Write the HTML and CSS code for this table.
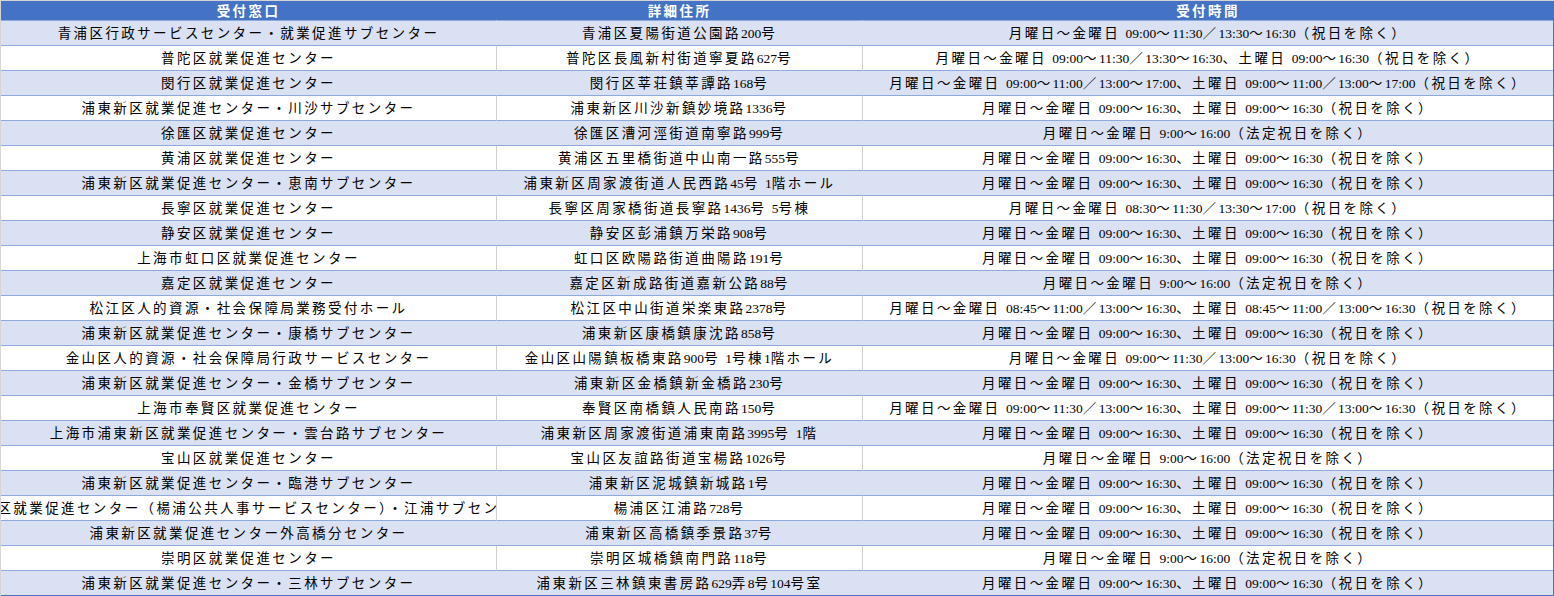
FILE: index.html
```html
<!DOCTYPE html>
<html lang="ja">
<head>
<meta charset="utf-8">
<title>受付窓口</title>
<link rel="stylesheet" href="styles.css">
</head>
<body>
<div class="sheet">
  <div class="grid">
    <div class="h c1"><span>受付窓口</span></div>
    <div class="h c2"><span>詳細住所</span></div>
    <div class="h c3"><span>受付時間</span></div>

    <div class="d c1"><span>青浦区行政サービスセンター・就業促進サブセンター</span></div>
    <div class="d c2"><span>青浦区夏陽街道公園路<span class="n">200</span>号</span></div>
    <div class="d c3"><span>月曜日～金曜日 <span class="n">09:00</span>～<span class="n">11:30</span>／<span class="n">13:30</span>～<span class="n">16:30</span>（祝日を除く）</span></div>

    <div class="w c1"><span>普陀区就業促進センター</span></div>
    <div class="w c2"><span>普陀区長風新村街道寧夏路<span class="n">627</span>号</span></div>
    <div class="w c3"><span>月曜日～金曜日 <span class="n">09:00</span>～<span class="n">11:30</span>／<span class="n">13:30</span>～<span class="n">16:30</span>、土曜日 <span class="n">09:00</span>～<span class="n">16:30</span>（祝日を除く）</span></div>

    <div class="d c1"><span>閔行区就業促進センター</span></div>
    <div class="d c2"><span>閔行区莘荘鎮莘譚路<span class="n">168</span>号</span></div>
    <div class="d c3"><span>月曜日～金曜日 <span class="n">09:00</span>～<span class="n">11:00</span>／<span class="n">13:00</span>～<span class="n">17:00</span>、土曜日 <span class="n">09:00</span>～<span class="n">11:00</span>／<span class="n">13:00</span>～<span class="n">17:00</span>（祝日を除く）</span></div>

    <div class="w c1"><span>浦東新区就業促進センター・川沙サブセンター</span></div>
    <div class="w c2"><span>浦東新区川沙新鎮妙境路<span class="n">1336</span>号</span></div>
    <div class="w c3"><span>月曜日～金曜日 <span class="n">09:00</span>～<span class="n">16:30</span>、土曜日 <span class="n">09:00</span>～<span class="n">16:30</span>（祝日を除く）</span></div>

    <div class="d c1"><span>徐匯区就業促進センター</span></div>
    <div class="d c2"><span>徐匯区漕河涇街道南寧路<span class="n">999</span>号</span></div>
    <div class="d c3"><span>月曜日～金曜日 <span class="n">9:00</span>～<span class="n">16:00</span>（法定祝日を除く）</span></div>

    <div class="w c1"><span>黄浦区就業促進センター</span></div>
    <div class="w c2"><span>黄浦区五里橋街道中山南一路<span class="n">555</span>号</span></div>
    <div class="w c3"><span>月曜日～金曜日 <span class="n">09:00</span>～<span class="n">16:30</span>、土曜日 <span class="n">09:00</span>～<span class="n">16:30</span>（祝日を除く）</span></div>

    <div class="d c1"><span>浦東新区就業促進センター・恵南サブセンター</span></div>
    <div class="d c2"><span>浦東新区周家渡街道人民西路<span class="n">45</span>号 <span class="n">1</span>階ホール</span></div>
    <div class="d c3"><span>月曜日～金曜日 <span class="n">09:00</span>～<span class="n">16:30</span>、土曜日 <span class="n">09:00</span>～<span class="n">16:30</span>（祝日を除く）</span></div>

    <div class="w c1"><span>長寧区就業促進センター</span></div>
    <div class="w c2"><span>長寧区周家橋街道長寧路<span class="n">1436</span>号 <span class="n">5</span>号棟</span></div>
    <div class="w c3"><span>月曜日～金曜日 <span class="n">08:30</span>～<span class="n">11:30</span>／<span class="n">13:30</span>～<span class="n">17:00</span>（祝日を除く）</span></div>

    <div class="d c1"><span>静安区就業促進センター</span></div>
    <div class="d c2"><span>静安区彭浦鎮万栄路<span class="n">908</span>号</span></div>
    <div class="d c3"><span>月曜日～金曜日 <span class="n">09:00</span>～<span class="n">16:30</span>、土曜日 <span class="n">09:00</span>～<span class="n">16:30</span>（祝日を除く）</span></div>

    <div class="w c1"><span>上海市虹口区就業促進センター</span></div>
    <div class="w c2"><span>虹口区欧陽路街道曲陽路<span class="n">191</span>号</span></div>
    <div class="w c3"><span>月曜日～金曜日 <span class="n">09:00</span>～<span class="n">16:30</span>、土曜日 <span class="n">09:00</span>～<span class="n">16:30</span>（祝日を除く）</span></div>

    <div class="d c1"><span>嘉定区就業促進センター</span></div>
    <div class="d c2"><span>嘉定区新成路街道嘉新公路<span class="n">88</span>号</span></div>
    <div class="d c3"><span>月曜日～金曜日 <span class="n">9:00</span>～<span class="n">16:00</span>（法定祝日を除く）</span></div>

    <div class="w c1"><span>松江区人的資源・社会保障局業務受付ホール</span></div>
    <div class="w c2"><span>松江区中山街道栄楽東路<span class="n">2378</span>号</span></div>
    <div class="w c3"><span>月曜日～金曜日 <span class="n">08:45</span>～<span class="n">11:00</span>／<span class="n">13:00</span>～<span class="n">16:30</span>、土曜日 <span class="n">08:45</span>～<span class="n">11:00</span>／<span class="n">13:00</span>～<span class="n">16:30</span>（祝日を除く）</span></div>

    <div class="d c1"><span>浦東新区就業促進センター・康橋サブセンター</span></div>
    <div class="d c2"><span>浦東新区康橋鎮康沈路<span class="n">858</span>号</span></div>
    <div class="d c3"><span>月曜日～金曜日 <span class="n">09:00</span>～<span class="n">16:30</span>、土曜日 <span class="n">09:00</span>～<span class="n">16:30</span>（祝日を除く）</span></div>

    <div class="w c1"><span>金山区人的資源・社会保障局行政サービスセンター</span></div>
    <div class="w c2"><span>金山区山陽鎮板橋東路<span class="n">900</span>号 <span class="n">1</span>号棟<span class="n">1</span>階ホール</span></div>
    <div class="w c3"><span>月曜日～金曜日 <span class="n">09:00</span>～<span class="n">11:30</span>／<span class="n">13:00</span>～<span class="n">16:30</span>（祝日を除く）</span></div>

    <div class="d c1"><span>浦東新区就業促進センター・金橋サブセンター</span></div>
    <div class="d c2"><span>浦東新区金橋鎮新金橋路<span class="n">230</span>号</span></div>
    <div class="d c3"><span>月曜日～金曜日 <span class="n">09:00</span>～<span class="n">16:30</span>、土曜日 <span class="n">09:00</span>～<span class="n">16:30</span>（祝日を除く）</span></div>

    <div class="w c1"><span>上海市奉賢区就業促進センター</span></div>
    <div class="w c2"><span>奉賢区南橋鎮人民南路<span class="n">150</span>号</span></div>
    <div class="w c3"><span>月曜日～金曜日 <span class="n">09:00</span>～<span class="n">11:30</span>／<span class="n">13:00</span>～<span class="n">16:30</span>、土曜日 <span class="n">09:00</span>～<span class="n">11:30</span>／<span class="n">13:00</span>～<span class="n">16:30</span>（祝日を除く）</span></div>

    <div class="d c1"><span>上海市浦東新区就業促進センター・雲台路サブセンター</span></div>
    <div class="d c2"><span>浦東新区周家渡街道浦東南路<span class="n">3995</span>号 <span class="n">1</span>階</span></div>
    <div class="d c3"><span>月曜日～金曜日 <span class="n">09:00</span>～<span class="n">16:30</span>、土曜日 <span class="n">09:00</span>～<span class="n">16:30</span>（祝日を除く）</span></div>

    <div class="w c1"><span>宝山区就業促進センター</span></div>
    <div class="w c2"><span>宝山区友誼路街道宝楊路<span class="n">1026</span>号</span></div>
    <div class="w c3"><span>月曜日～金曜日 <span class="n">9:00</span>～<span class="n">16:00</span>（法定祝日を除く）</span></div>

    <div class="d c1"><span>浦東新区就業促進センター・臨港サブセンター</span></div>
    <div class="d c2"><span>浦東新区泥城鎮新城路<span class="n">1</span>号</span></div>
    <div class="d c3"><span>月曜日～金曜日 <span class="n">09:00</span>～<span class="n">16:30</span>、土曜日 <span class="n">09:00</span>～<span class="n">16:30</span>（祝日を除く）</span></div>

    <div class="w c1"><span>楊浦区就業促進センター（楊浦公共人事サービスセンター）・江浦サブセンター</span></div>
    <div class="w c2"><span>楊浦区江浦路<span class="n">728</span>号</span></div>
    <div class="w c3"><span>月曜日～金曜日 <span class="n">09:00</span>～<span class="n">16:30</span>、土曜日 <span class="n">09:00</span>～<span class="n">16:30</span>（祝日を除く）</span></div>

    <div class="d c1"><span>浦東新区就業促進センター外高橋分センター</span></div>
    <div class="d c2"><span>浦東新区高橋鎮季景路<span class="n">37</span>号</span></div>
    <div class="d c3"><span>月曜日～金曜日 <span class="n">09:00</span>～<span class="n">16:30</span>、土曜日 <span class="n">09:00</span>～<span class="n">16:30</span>（祝日を除く）</span></div>

    <div class="w c1"><span>崇明区就業促進センター</span></div>
    <div class="w c2"><span>崇明区城橋鎮南門路<span class="n">118</span>号</span></div>
    <div class="w c3"><span>月曜日～金曜日 <span class="n">9:00</span>～<span class="n">16:00</span>（法定祝日を除く）</span></div>

    <div class="d c1"><span>浦東新区就業促進センター・三林サブセンター</span></div>
    <div class="d c2"><span>浦東新区三林鎮東書房路<span class="n">629</span>弄<span class="n">8</span>号<span class="n">104</span>号室</span></div>
    <div class="d c3"><span>月曜日～金曜日 <span class="n">09:00</span>～<span class="n">16:30</span>、土曜日 <span class="n">09:00</span>～<span class="n">16:30</span>（祝日を除く）</span></div>
  </div>
</div>
</body>
</html>
```

FILE: styles.css
```css
html, body {
  margin: 0;
  padding: 0;
  background: #ffffff;
}

.sheet {
  width: 1554px;
  height: 596px;
  box-sizing: border-box;
  border-top: 1px solid #d4d4d4;
  border-left: 1px solid #d4d4d4;
  overflow: hidden;
}

.grid {
  display: grid;
  grid-template-columns: 496px 366px 1fr;
  grid-template-rows: 19px;
  grid-auto-rows: 25px;
  border-right: 1px solid #4472c4;
  border-bottom: 1px solid #4472c4;
  font-family: "Noto Sans CJK JP", "Noto Sans", sans-serif;
  font-size: 13.5px;
  letter-spacing: 2.4px;
  color: #000000;
}

.grid > div {
  display: flex;
  justify-content: center;
  align-items: center;
  white-space: nowrap;
  overflow: hidden;
  box-sizing: border-box;
  min-width: 0;
}

.grid > div > span {
  flex: none;
  line-height: 1;
}

.c1, .c2 {
  border-right: 1px solid transparent;
}

.h {
  background: #4472c4;
  color: #ffffff;
  font-weight: bold;
  border-right-color: #4472c4;
}

.d {
  background: #d9e1f2;
  border-top: 1px solid #8ea9db;
  border-right-color: #d9e1f2;
}

.w {
  background: #ffffff;
  border-top: 1px solid #8ea9db;
}

.w.c1, .w.c2 {
  border-right-color: #d0d0d0;
}

.n {
  font-family: "Liberation Serif", serif;
  font-size: 13.5px;
  letter-spacing: 0;
}
```
